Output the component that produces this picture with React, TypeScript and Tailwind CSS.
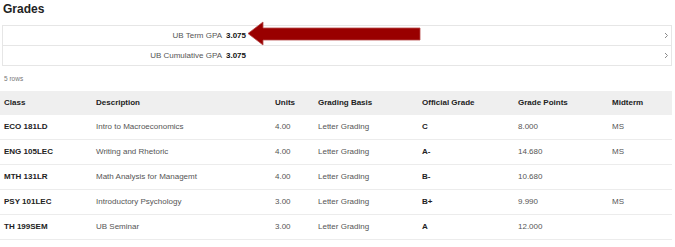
import React from "react";

const rows = [
  { cls: "ECO 181LD", desc: "Intro to Macroeconomics", units: "4.00", basis: "Letter Grading", grade: "C", pts: "8.000", mid: "MS" },
  { cls: "ENG 105LEC", desc: "Writing and Rhetoric", units: "4.00", basis: "Letter Grading", grade: "A-", pts: "14.680", mid: "MS" },
  { cls: "MTH 131LR", desc: "Math Analysis for Managemt", units: "4.00", basis: "Letter Grading", grade: "B-", pts: "10.680", mid: "" },
  { cls: "PSY 101LEC", desc: "Introductory Psychology", units: "3.00", basis: "Letter Grading", grade: "B+", pts: "9.990", mid: "MS" },
  { cls: "TH 199SEM", desc: "UB Seminar", units: "3.00", basis: "Letter Grading", grade: "A", pts: "12.000", mid: "" },
];

const cols = "grid grid-cols-[92px_179px_43px_104px_96px_94px_64px]";

function Chevron() {
  return (
    <svg width="5" height="7" viewBox="0 0 5 7" className="absolute right-[2px]">
      <path d="M1 1 L3.5 3.5 L1 6" fill="none" stroke="#8a8a8a" strokeWidth="1" />
    </svg>
  );
}

export default function App() {
  return (
    <div className="w-[675px] h-[247px] bg-white relative overflow-hidden" style={{ fontFamily: '"Liberation Sans", Arial, sans-serif' }}>
      <div className="pl-[3px] pt-[2px] h-[25px] text-[12px] font-bold text-[#222] leading-[15px]">Grades</div>
      <div className="ml-[2px] w-[670px] border border-[#e6e6e6] flex flex-col">
        <div className="relative h-[20px] flex items-center border-b border-[#e6e6e6]">
          <div className="w-[219px] text-right text-[8px] text-[#555]">UB Term GPA</div>
          <div className="pl-[4px] text-[8px] font-bold text-[#111]">3.075</div>
          <Chevron />
        </div>
        <div className="relative h-[19px] flex items-center">
          <div className="w-[219px] text-right text-[8px] text-[#555]">UB Cumulative GPA</div>
          <div className="pl-[4px] text-[8px] font-bold text-[#111]">3.075</div>
          <Chevron />
        </div>
      </div>
      <div className="pl-[4px] pt-[8px] h-[25px] text-[6.5px] text-[#777]">5 rows</div>
      <div className="w-[672px]">
        <div className={`${cols} h-[24px] items-center bg-[#efefef] text-[8px] font-bold text-[#222] pl-[4px]`}>
          <div>Class</div>
          <div>Description</div>
          <div>Units</div>
          <div>Grading Basis</div>
          <div>Official Grade</div>
          <div>Grade Points</div>
          <div>Midterm</div>
        </div>
        {rows.map((r) => (
          <div key={r.cls} className={`${cols} h-[25px] items-center border-b border-[#ececec] text-[8px] text-[#555] pl-[4px]`}>
            <div className="font-bold text-[#222]">{r.cls}</div>
            <div>{r.desc}</div>
            <div>{r.units}</div>
            <div>{r.basis}</div>
            <div className="font-bold text-[#222]">{r.grade}</div>
            <div>{r.pts}</div>
            <div>{r.mid}</div>
          </div>
        ))}
      </div>
      <svg className="absolute left-[246px] top-[21px]" width="176" height="26" viewBox="0 0 176 26">
        <polygon points="2,12.5 17,1 17,7 174,7 174,19 17,19 17,24" fill="#990000" stroke="#b84a4a" strokeWidth="0.8" />
      </svg>
    </div>
  );
}
